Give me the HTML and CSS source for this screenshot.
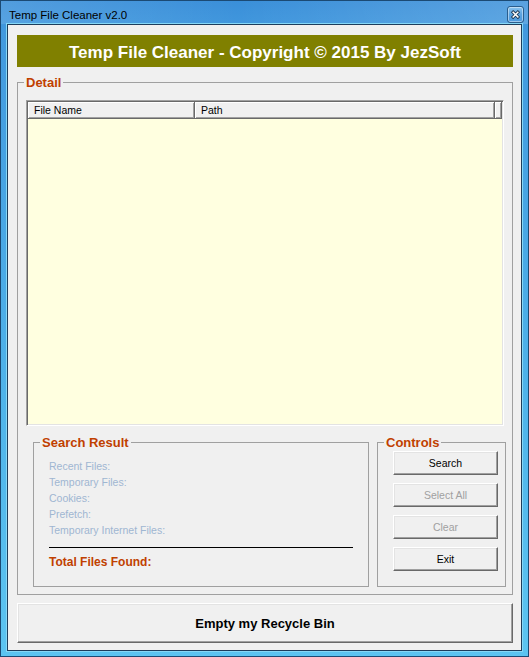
FILE: index.html
```html
<!DOCTYPE html>
<html lang="en">
<head>
  <meta charset="UTF-8">
  <meta name="viewport" content="width=device-width, initial-scale=1.0">
  <title>Temp File Cleaner v2.0</title>
  <link rel="stylesheet" href="styles.css">
</head>
<body>
  <div class="window">
    <div class="titlebar">
      <span class="title">Temp File Cleaner v2.0</span>
      <button class="close-btn" title="Close">
        <svg width="16" height="16" viewBox="0 0 16 16">
          <path d="M5.5 5 L10.5 10 M10.5 5 L5.5 10" stroke="#1c3450" stroke-width="3.4" stroke-linecap="square" fill="none"/>
          <path d="M5.5 5 L10.5 10 M10.5 5 L5.5 10" stroke="#fff" stroke-width="1.6" stroke-linecap="square" fill="none"/>
        </svg>
      </button>
    </div>

    <div class="client">
      <div class="banner">Temp File Cleaner - Copyright © 2015 By JezSoft</div>

      <fieldset class="group detail">
        <legend>Detail</legend>

        <div class="list-view">
          <div class="list-header">
            <div class="col col-name">File Name</div>
            <div class="col col-path">Path</div>
            <div class="col col-fill"></div>
          </div>
          <div class="list-body"></div>
        </div>

        <div class="bottom-row">
          <fieldset class="group results">
            <legend>Search Result</legend>
            <div class="result-body">
              <div class="result-line">Recent Files:</div>
              <div class="result-line">Temporary Files:</div>
              <div class="result-line">Cookies:</div>
              <div class="result-line">Prefetch:</div>
              <div class="result-line">Temporary Internet Files:</div>
              <div class="divider"></div>
              <div class="total">Total Files Found:</div>
            </div>
          </fieldset>

          <fieldset class="group controls">
            <legend>Controls</legend>
            <div class="btn-stack">
              <button class="win-btn">Search</button>
              <button class="win-btn" disabled>Select All</button>
              <button class="win-btn" disabled>Clear</button>
              <button class="win-btn">Exit</button>
            </div>
          </fieldset>
        </div>
      </fieldset>

      <button class="win-btn big-btn">Empty my Recycle Bin</button>
    </div>
  </div>
</body>
</html>
```

FILE: styles.css
```css
* {
  box-sizing: border-box;
  margin: 0;
  padding: 0;
}

body {
  width: 529px;
  height: 657px;
  overflow: hidden;
  font-family: "Liberation Sans", Arial, sans-serif;
  font-size: 10.5px;
  color: #000;
  background: #3d95dd;
}

/* window frame */
.window {
  display: flex;
  flex-direction: column;
  width: 529px;
  height: 657px;
  padding: 0 6px 5px;
  border: 1px solid #1b4a74;
  background: linear-gradient(to bottom, #3a8fd9 0, #4299de 30px, #4fb3ea 60%, #5cc4f1 100%);
}

.titlebar {
  display: flex;
  align-items: center;
  justify-content: space-between;
  height: 23px;
  margin: 0 -6px;
  padding: 4px 4px 0 8px;
  background: linear-gradient(to right, rgba(255, 255, 255, 0.12), rgba(255, 255, 255, 0) 45%, rgba(255, 255, 255, 0.16));
}

.title {
  font-size: 11.5px;
  line-height: 14px;
  color: #000;
}

.close-btn {
  display: flex;
  width: 17px;
  height: 17px;
  border: 1px solid #2a5d8c;
  border-radius: 3px;
  background: linear-gradient(to bottom, #8cc4ee, #5aa3e0 50%, #4d98dc);
  box-shadow: inset 0 0 0 1px rgba(255, 255, 255, 0.45);
}

/* client area */
.client {
  flex: 1;
  display: flex;
  flex-direction: column;
  padding: 10px 8px 0 9px;
  background: #f0f0f0;
  border: 1px solid #1d3d5c;
  box-shadow: 0 0 0 1px #86d8f7;
}

.banner {
  display: flex;
  align-items: center;
  justify-content: center;
  height: 32px;
  padding-top: 4px;
  background: #808000;
  color: #fff;
  font-size: 17px;
  font-weight: bold;
}

/* group boxes */
.group {
  border: 1px solid #a0a0a0;
  min-width: 0;
}

.group legend {
  margin-left: -2px;
  padding: 0 2px;
  font-size: 13px;
  font-weight: bold;
  line-height: 15px;
  color: #c04000;
}

.detail {
  margin-top: 8px;
  padding: 10px 8px 7px;
}

/* list view */
.list-view {
  display: flex;
  flex-direction: column;
  height: 326px;
  padding: 1px;
  background: #ffffe0;
  border: 1px solid;
  border-color: #a0a0a0 #fff #fff #a0a0a0;
  box-shadow: inset 1px 1px #696969, inset -1px -1px #e3e3e3;
}

.list-header {
  display: flex;
}

.col {
  height: 17px;
  padding-left: 6px;
  line-height: 16px;
  white-space: nowrap;
  background: #f0f0f0;
  border-right: 1px solid #696969;
  border-bottom: 1px solid #696969;
  box-shadow: inset 1px 1px #fff, inset -1px -1px #a0a0a0;
}

.col-name {
  width: 167px;
}

.col-path {
  width: 300px;
}

.col-fill {
  flex: 1;
}

.list-body {
  flex: 1;
}

/* search result + controls */
.bottom-row {
  display: flex;
  margin-top: 9px;
}

.results {
  flex: none;
  width: 336px;
  height: 152px;
  margin-left: 7px;
  padding: 8px 8px 0;
}

.result-body {
  padding-left: 7px;
}

.result-line {
  line-height: 16px;
  color: #9fb6d2;
}

.divider {
  width: 304px;
  height: 1px;
  margin-top: 9px;
  background: #000;
}

.total {
  margin-top: 6px;
  font-size: 12px;
  font-weight: bold;
  line-height: 16px;
  color: #c04000;
}

.controls {
  flex: none;
  width: 129px;
  height: 152px;
  margin-left: 8px;
  padding: 1px 0 0 8px;
}

.btn-stack {
  display: flex;
  flex-direction: column;
  gap: 8px;
  padding-left: 7px;
}

/* classic raised buttons */
.win-btn {
  width: 105px;
  height: 24px;
  font-family: "Liberation Sans", Arial, sans-serif;
  font-size: 10.5px;
  color: #000;
  background: #f0f0f0;
  border: 1px solid;
  border-color: #fff #696969 #696969 #fff;
  box-shadow: inset -1px -1px #a0a0a0, inset 1px 1px #e3e3e3;
}

.win-btn:disabled {
  color: #a0a0a0;
}

.big-btn {
  width: 496px;
  height: 40px;
  margin-top: 8px;
  font-size: 13px;
  font-weight: bold;
}
```
